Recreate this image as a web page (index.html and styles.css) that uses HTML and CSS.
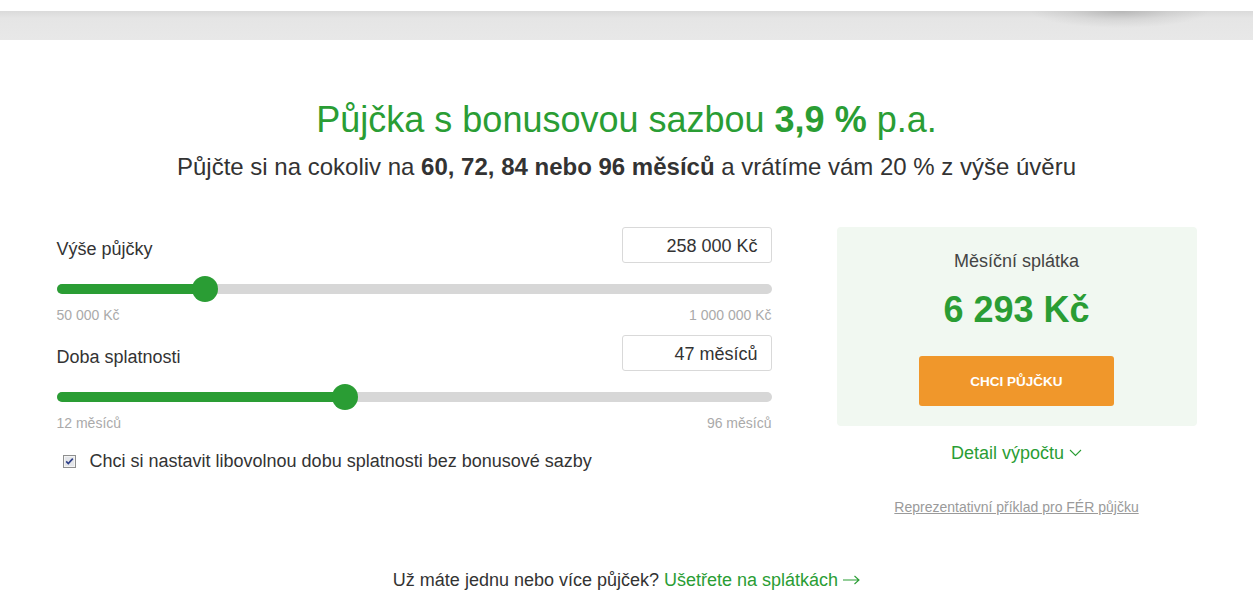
FILE: index.html
```html
<!DOCTYPE html>
<html lang="cs">
<head>
<meta charset="utf-8">
<title>Půjčka s bonusovou sazbou</title>
<link rel="stylesheet" href="styles.css">
</head>
<body>
<div class="topbar"></div>
<main class="page">
  <h1 class="title">Půjčka s bonusovou sazbou <strong>3,9 %</strong> p.a.</h1>
  <p class="subtitle">Půjčte si na cokoliv na <strong>60, 72, 84 nebo 96 měsíců</strong> a vrátíme vám 20 % z výše úvěru</p>

  <section class="calc">
    <div class="controls">
      <div class="group">
        <div class="group-head">
          <span class="label">Výše půjčky</span>
          <div class="value-box">258 000 Kč</div>
        </div>
        <div class="slider">
          <div class="track"></div>
          <div class="fill" style="width: 20.8%"></div>
          <div class="thumb" style="left: 20.8%"></div>
        </div>
        <div class="range">
          <span>50 000 Kč</span>
          <span>1 000 000 Kč</span>
        </div>
      </div>

      <div class="group">
        <div class="group-head">
          <span class="label">Doba splatnosti</span>
          <div class="value-box">47 měsíců</div>
        </div>
        <div class="slider">
          <div class="track"></div>
          <div class="fill" style="width: 40.4%"></div>
          <div class="thumb" style="left: 40.4%"></div>
        </div>
        <div class="range">
          <span>12 měsíců</span>
          <span>96 měsíců</span>
        </div>
      </div>

      <label class="check">
        <svg class="check-box" width="13" height="13" viewBox="0 0 13 13">
          <rect x="0.5" y="0.5" width="12" height="12" fill="#f4f4f4" stroke="#8e8f8f"/>
          <rect x="2" y="2" width="9" height="9" fill="#e4e6ea"/>
          <path d="M3.2 6.4 L5.3 8.6 L9.8 3.6" fill="none" stroke="#2c3e88" stroke-width="1.6"/>
        </svg>
        <span>Chci si nastavit libovolnou dobu splatnosti bez bonusové sazby</span>
      </label>
    </div>

    <aside class="result">
      <div class="result-box">
        <div class="result-label">Měsíční splátka</div>
        <div class="result-amount">6 293 Kč</div>
        <a class="btn" href="#">CHCI PŮJČKU</a>
      </div>
      <a class="detail" href="#">Detail výpočtu<svg class="chev" width="13" height="8" viewBox="0 0 13 8"><path d="M1 1 L6.5 6.5 L12 1" fill="none" stroke="#2a9d34" stroke-width="1.1"/></svg></a>
      <a class="repr" href="#">Reprezentativní příklad pro FÉR půjčku</a>
    </aside>
  </section>

  <p class="more">Už máte jednu nebo více půjček? <a href="#">Ušetřete na splátkách<svg class="arrow" width="17" height="10" viewBox="0 0 17 10"><path d="M0 5 H16 M11.5 1 L16 5 L11.5 9" fill="none" stroke="#2a9d34" stroke-width="1.1"/></svg></a></p>
</main>
</body>
</html>
```

FILE: styles.css
```css
* { box-sizing: border-box; }

body {
  margin: 0;
  background: #fff;
  font-family: "Liberation Sans", Arial, sans-serif;
  color: #333;
}

.topbar {
  margin-top: 11px;
  height: 29px;
  background:
    radial-gradient(ellipse 90px 17px at 1120px 0, rgba(0,0,0,0.17), rgba(0,0,0,0.06) 55%, rgba(0,0,0,0) 100%),
    linear-gradient(#dadada, #e5e5e5 25%, #e8e8e8 100%);
}

.page {
  width: 1140px;
  margin: 0 auto;
}

.title {
  margin: 58px 0 0;
  font-size: 36px;
  line-height: 44px;
  font-weight: normal;
  color: #2a9d34;
  text-align: center;
}

.title strong { font-weight: bold; }

.subtitle {
  margin: 11px 0 0;
  font-size: 24px;
  line-height: 28px;
  color: #333;
  text-align: center;
}

.calc {
  display: flex;
  gap: 65px;
  margin-top: 46px;
  align-items: flex-start;
}

.controls {
  width: 715px;
  display: flex;
  flex-direction: column;
}

.group + .group { margin-top: 12px; }

.group-head {
  display: flex;
  justify-content: space-between;
  align-items: flex-start;
  height: 36px;
}

.label {
  font-size: 18px;
  line-height: 22px;
  padding-top: 11px;
  color: #333;
}

.value-box {
  width: 150px;
  height: 36px;
  border: 1px solid #d9d9d9;
  border-radius: 3px;
  padding: 7px 13px 0 0;
  text-align: right;
  font-size: 18px;
  line-height: 22px;
  color: #333;
  background: #fff;
}

.slider {
  position: relative;
  height: 26px;
  padding-top: 8px;
  margin-top: 13px;
}

.track {
  height: 10px;
  border-radius: 5px;
  background: #d7d7d7;
}

.fill {
  position: absolute;
  left: 0;
  top: 8px;
  height: 10px;
  border-radius: 5px 0 0 5px;
  background: #2a9d34;
}

.thumb {
  position: absolute;
  top: 0;
  width: 26px;
  height: 26px;
  margin-left: -13px;
  border-radius: 50%;
  background: #2a9d34;
}

.range {
  display: flex;
  justify-content: space-between;
  margin-top: 5px;
  font-size: 14px;
  line-height: 16px;
  color: #aaa;
}

.check {
  display: flex;
  align-items: center;
  margin-top: 19px;
  font-size: 18px;
  line-height: 22px;
  color: #333;
}

.check-box {
  margin: 1px 14px 0 6px;
  flex: none;
}

.result {
  width: 360px;
  display: flex;
  flex-direction: column;
  align-items: center;
  text-align: center;
}

.result-box {
  width: 100%;
  background: #f1f8f1;
  border-radius: 4px;
  padding: 23px 20px 20px;
  display: flex;
  flex-direction: column;
  align-items: center;
}

.result-label {
  font-size: 18px;
  line-height: 22px;
  color: #444;
}

.result-amount {
  margin-top: 16px;
  font-size: 36px;
  line-height: 44px;
  font-weight: bold;
  color: #2a9d34;
}

.btn {
  margin-top: 24px;
  width: 195px;
  height: 50px;
  display: flex;
  align-items: center;
  justify-content: center;
  background: #f0972b;
  border-radius: 3px;
  color: #fff;
  font-weight: bold;
  font-size: 13.5px;
  text-decoration: none;
}

.detail {
  margin-top: 16px;
  font-size: 18px;
  line-height: 22px;
  color: #2a9d34;
  text-decoration: none;
}

.chev {
  margin-left: 5px;
  vertical-align: 2px;
}

.repr {
  margin-top: 35px;
  font-size: 14px;
  line-height: 16px;
  color: #9a9a9a;
  text-decoration: underline;
}

.more {
  margin: 54px 0 0;
  text-align: center;
  font-size: 18px;
  line-height: 22px;
  color: #333;
}

.more a {
  color: #2a9d34;
  text-decoration: none;
}

.arrow {
  margin-left: 5px;
  vertical-align: 1px;
}
```
